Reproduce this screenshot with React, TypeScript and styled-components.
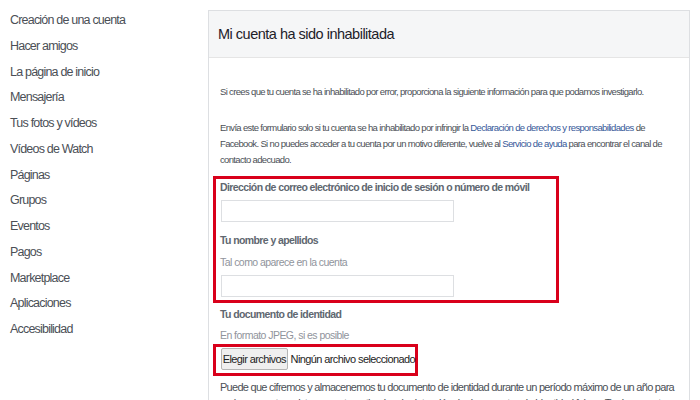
import React from "react";
import styled, { createGlobalStyle } from "styled-components";

const GlobalStyle = createGlobalStyle`
  html, body {
    margin: 0;
    padding: 0;
    background: #ffffff;
    font-family: "Liberation Sans", Arial, sans-serif;
  }
`;

const Page = styled.div`
  display: flex;
  align-items: flex-start;
  width: 700px;
  height: 400px;
  overflow: hidden;
`;

const Sidebar = styled.ul`
  list-style: none;
  margin: 0;
  padding: 7px 0 0 10px;
  width: 198px;
  flex-shrink: 0;
`;

const NavItem = styled.li`
  height: 25.75px;
  line-height: 26px;
  font-size: 12.5px;
  letter-spacing: -0.8px;
  color: #4b4f56;
  white-space: nowrap;
`;

const Panel = styled.section`
  margin-top: 10px;
  width: 480px;
  border: 1px solid #dddfe2;
  background: #ffffff;
`;

const Header = styled.h2`
  margin: 0;
  height: 46px;
  line-height: 46px;
  padding-left: 9px;
  background: #f5f6f7;
  border-bottom: 1px solid #e5e5e5;
  font-size: 14.5px;
  font-weight: normal;
  letter-spacing: -0.5px;
  color: #1d2129;
`;

const Body = styled.div`
  padding: 26px 10px 0 11px;
`;

const Paragraph = styled.p<{ $gap?: number; $top?: number; $large?: boolean }>`
  margin: ${(p) => p.$top ?? 0}px 0 ${(p) => p.$gap ?? 20}px;
  font-size: ${(p) => (p.$large ? 11 : 9.5)}px;
  line-height: 16px;
  letter-spacing: ${(p) => (p.$large ? -0.72 : -0.66)}px;
  color: #4b4f56;
`;

const Link = styled.a`
  color: #365899;
  text-decoration: none;
`;

const Highlight = styled.div<{ $width: number }>`
  width: ${(p) => p.$width}px;
  box-sizing: border-box;
  border: 3px solid #d9001b;
  margin-left: -7px;
`;

const FieldBox = styled(Highlight)`
  padding: 0 0 3px 4px;
`;

const FileBox = styled(Highlight)`
  display: flex;
  align-items: center;
  gap: 3px;
  padding: 1px 0 3px 5px;
  margin-top: 1px;
`;

const Label = styled.div<{ $top?: number }>`
  margin-top: ${(p) => p.$top ?? 0}px;
  font-size: 10.5px;
  line-height: 16px;
  font-weight: bold;
  letter-spacing: -0.6px;
  color: #606770;
  white-space: nowrap;
`;

const Hint = styled.div<{ $top?: number }>`
  margin-top: ${(p) => p.$top ?? 0}px;
  font-size: 10.5px;
  line-height: 16px;
  letter-spacing: -0.55px;
  color: #90949c;
`;

const TextInput = styled.input`
  display: block;
  box-sizing: border-box;
  width: 233px;
  height: 22px;
  margin: 5px 0 0 1px;
  border: 1px solid #dddfe2;
  background: #ffffff;
  outline: none;
`;

const ChooseButton = styled.button`
  height: 22px;
  width: 72px;
  padding: 0;
  border: 1px solid #b5b5b5;
  border-radius: 2px;
  background: #efefef;
  font-family: "Liberation Sans", Arial, sans-serif;
  font-size: 11px;
  letter-spacing: -0.6px;
  color: #1d1d1d;
  white-space: nowrap;
`;

const FileName = styled.span`
  font-size: 11px;
  letter-spacing: -0.6px;
  color: #1d1d1d;
  white-space: nowrap;
`;

const navItems = [
  "Creación de una cuenta",
  "Hacer amigos",
  "La página de inicio",
  "Mensajería",
  "Tus fotos y vídeos",
  "Vídeos de Watch",
  "Páginas",
  "Grupos",
  "Eventos",
  "Pagos",
  "Marketplace",
  "Aplicaciones",
  "Accesibilidad",
];

export default function App() {
  return (
    <>
      <GlobalStyle />
      <Page>
        <Sidebar>
          {navItems.map((item) => (
            <NavItem key={item}>{item}</NavItem>
          ))}
        </Sidebar>
        <Panel>
          <Header>Mi cuenta ha sido inhabilitada</Header>
          <Body>
            <Paragraph>
              Si crees que tu cuenta se ha inhabilitado por error, proporciona la
              siguiente información para que podamos investigarlo.
            </Paragraph>
            <Paragraph $gap={8}>
              Envía este formulario solo si tu cuenta se ha inhabilitado por
              infringir la <Link href="#">Declaración de derechos y responsabilidades</Link>{" "}
              de Facebook. Si no puedes acceder a tu cuenta por un motivo
              diferente, vuelve al <Link href="#">Servicio de ayuda</Link> para
              encontrar el canal de contacto adecuado.
            </Paragraph>
            <FieldBox $width={346}>
              <Label>
                Dirección de correo electrónico de inicio de sesión o número de móvil
              </Label>
              <TextInput type="text" />
              <Label $top={10}>Tu nombre y apellidos</Label>
              <Hint $top={6}>Tal como aparece en la cuenta</Hint>
              <TextInput type="text" />
            </FieldBox>
            <Label $top={3}>Tu documento de identidad</Label>
            <Hint $top={5}>En formato JPEG, si es posible</Hint>
            <FileBox $width={205}>
              <ChooseButton type="button">Elegir archivos</ChooseButton>
              <FileName>Ningún archivo seleccionado</FileName>
            </FileBox>
            <Paragraph $gap={0} $top={3} $large>
              Puede que cifremos y almacenemos tu documento de identidad durante
              un período máximo de un año para mejorar nuestros sistemas
              automatizados de detección de documentos de identidad falsos. Tu
              documento de identidad se eliminará de forma segura.
            </Paragraph>
          </Body>
        </Panel>
      </Page>
    </>
  );
}
